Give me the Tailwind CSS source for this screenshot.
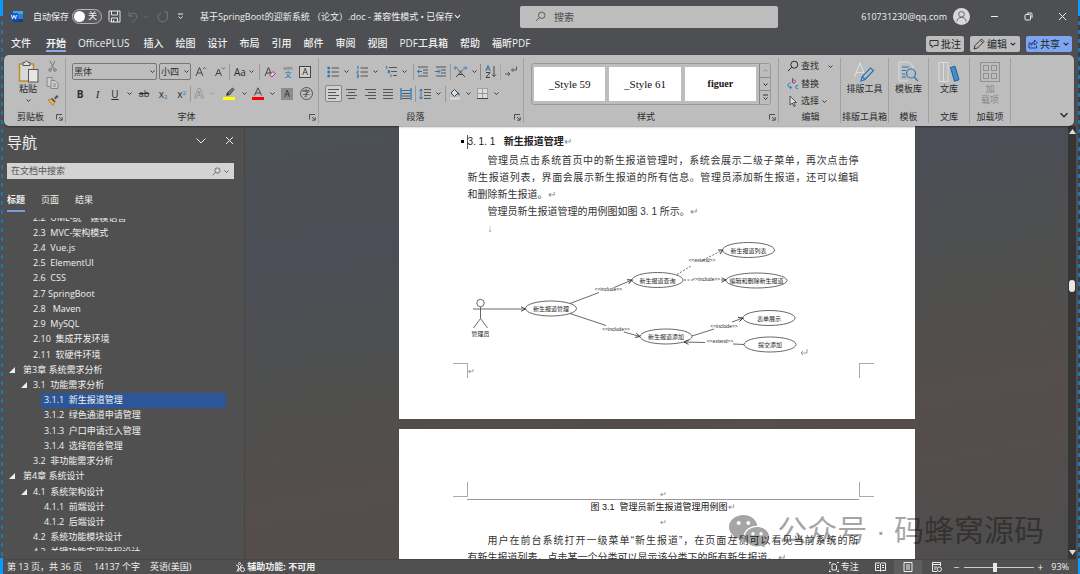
<!DOCTYPE html>
<html lang="zh-CN">
<head>
<meta charset="utf-8">
<meta name="viewport" content="width=device-width, initial-scale=1">
<title>基于SpringBoot的迎新系统 （论文）.doc</title>
<script src="https://cdn.jsdelivr.net/npm/@tailwindcss/browser@4"></script>
</head>
<body class="flex h-screen overflow-hidden bg-[#4d4f53] font-['Open_Sans','Noto_Sans_CJK_SC',sans-serif] text-[9px] leading-[12px] text-[#f0f0f0]">

<svg class="hidden" aria-hidden="true">
  <symbol id="chev" viewBox="0 0 7 7"><path d="M1.500 2.500l2 2 2-2" fill="none" stroke="currentColor" stroke-width=".9"/></symbol>
  <symbol id="launch" viewBox="0 0 7 7"><path d="M.5 5.500V.5H6M3 3l3 3M6.200 3v3.200H3" fill="none" stroke="#444" stroke-width=".9"/></symbol>
  <symbol id="lines" viewBox="0 0 12 12"><path d="M1 1.500h10M1 4.500h10M1 7.500h10M1 10.500h10" stroke="#555" stroke-width="1" fill="none"/></symbol>
  <symbol id="search" viewBox="0 0 12 12"><circle cx="7.300" cy="4.700" r="3.500" fill="none" stroke="currentColor"/><path d="M4.700 7.300L1 11" stroke="currentColor" fill="none"/></symbol>
</svg>

<!-- left window edge -->
<div class="flex w-1 shrink-0 flex-col">
  <div class="h-4 w-[3px] bg-[#0a9bff]"></div>
  <div class="ml-px w-[2px] flex-1 bg-[repeating-linear-gradient(#4d4f53_0_5px,#1f76ad_5px_9px)]"></div>
  <div class="h-4 w-[3px] bg-[#0a9bff]"></div>
</div>

<div class="flex min-w-0 flex-1 flex-col">
  <!-- title bar -->
  <header class="grid h-[33px] shrink-0 grid-cols-[516fr_258fr_298fr] items-center">
    <div class="flex items-center pl-1.5 whitespace-nowrap">
      <svg class="size-[13px]" viewBox="0 0 13 13"><rect x="3" y="1" width="10" height="11" rx="1" fill="#2b7cd3"/><rect x="3" y="1" width="10" height="3" fill="#41a5ee"/><rect x="3" y="9" width="10" height="3" fill="#103f91"/><rect y="3" width="8" height="7.500" rx="1" fill="#185abd"/><path d="M1.500 5l1 3.800L4 5.300l1.500 3.500 1-3.800" fill="none" stroke="#fff" stroke-width=".9"/></svg>
      <label for="autosave" class="ml-2.5">自动保存</label>
      <span class="relative ml-[3px] flex">
        <input id="autosave" type="checkbox" role="switch" class="h-[15px] w-[30px] appearance-none rounded-full border border-[#b5b5b5] bg-[#5b5b5b]">
        <span class="pointer-events-none absolute top-[2px] left-[2px] size-[11px] rounded-full bg-white"></span>
        <span class="pointer-events-none absolute top-[1px] left-4">关</span>
      </span>
      <button aria-label="保存" class="ml-1.5"><svg class="size-[13px]" viewBox="0 0 13 13" fill="none" stroke="#e8e8e8"><path d="M1 1h11v11H2.500L1 10.500zM3.500 1v4h6V1M3.500 12V8h6v4M5.500 12v-2"/></svg></button>
      <button aria-label="撤消" class="ml-1.5 flex items-center text-[#74777b]"><svg class="size-3" viewBox="0 0 12 12" fill="none" stroke="currentColor"><path d="M2 1v4h4M2 5c2-4 8-3.500 8 .5C10 8 7 9 5 11.500"/></svg><svg class="ml-1 size-[6px]"><use href="#chev"/></svg></button>
      <button aria-label="重做" class="ml-2 text-[#74777b]"><svg class="size-3" viewBox="0 0 12 12" fill="none" stroke="currentColor"><path d="M7 1h3.500v3.500M10 4.200A4.700 4.700 0 1 1 4 1.800"/></svg></button>
      <button aria-label="自定义快速访问工具栏" class="ml-2"><svg class="size-[7px]" viewBox="0 0 7 7" fill="none" stroke="#eee"><path d="M1 1h5M1.500 3.500l2 2 2-2"/></svg></button>
      <h1 class="ml-4">基于SpringBoot的迎新系统 （论文）.doc - 兼容性模式 • 已保存</h1>
      <svg class="size-[9px]"><use href="#chev"/></svg>
    </div>
    <label class="flex h-[22px] items-center rounded-xs bg-[#bdbdbd] px-[15px] text-[#555]">
      <svg class="size-[11px]"><use href="#search"/></svg>
      <input type="search" aria-label="搜索" placeholder="搜索" class="ml-2 min-w-0 flex-1 bg-transparent text-[10px] outline-none placeholder:text-[#4a4a4a]">
    </label>
    <div class="flex items-center justify-end pr-[9px]">
      <span>610731230@qq.com</span>
      <svg class="ml-1.5 size-[17px]" viewBox="0 0 17 17"><circle cx="8.500" cy="8.500" r="8.500" fill="#d8d8d8"/><g fill="none" stroke="#666"><circle cx="8.500" cy="6.300" r="2.800"/><path d="M3.800 13.500c.5-5.500 8.900-5.500 9.400 0"/></g></svg>
      <button aria-label="最小化" class="ml-5"><svg class="size-[9px]" viewBox="0 0 9 9"><path d="M1 4.500h7" stroke="#eee"/></svg></button>
      <button aria-label="还原" class="ml-[25px]"><svg class="size-[9px]" viewBox="0 0 9 9" fill="none" stroke="#eee"><rect x="1" y="2.500" width="5.500" height="5.500" rx="1"/><path d="M3 1h4c.7 0 1 .3 1 1v4"/></svg></button>
      <button aria-label="关闭" class="ml-[25px]"><svg class="size-[9px]" viewBox="0 0 9 9" stroke="#eee"><path d="M1 1l7 7M8 1L1 8"/></svg></button>
    </div>
  </header>

  <!-- ribbon tabs -->
  <div class="flex h-[22px] shrink-0 items-center justify-between pr-1 pl-[7px] text-[10px] leading-[14px] whitespace-nowrap">
    <nav class="flex gap-3 font-medium" aria-label="功能区选项卡">
      <a href="#" class="mr-[3px]">文件</a>
      <a href="#" class="border-b-2 border-[#8fa9e6] font-bold">开始</a>
      <a href="#" class="mr-0.5">OfficePLUS</a><a href="#">插入</a><a href="#">绘图</a><a href="#">设计</a><a href="#">布局</a><a href="#">引用</a><a href="#">邮件</a><a href="#">审阅</a><a href="#">视图</a><a href="#">PDF工具箱</a><a href="#">帮助</a><a href="#">福昕PDF</a>
    </nav>
    <div class="flex gap-1.5 text-[#222]">
      <button class="flex h-4 items-center gap-0.5 rounded-xs bg-[#bdbdbd] px-[3px]"><svg class="size-[10px]" viewBox="0 0 10 10" fill="none" stroke="#333"><path d="M1 1.500h8v5H5L3 8.500v-2H1z"/></svg>批注</button>
      <button class="flex h-4 items-center gap-0.5 rounded-xs bg-[#bdbdbd] px-[3px]"><svg class="size-3" viewBox="0 0 12 12" fill="none" stroke="#333"><path d="M1 11l1-3.500L8.500 1 11 3.500 4.500 10zM7.500 2.500L9.700 4.700"/></svg>编辑<svg class="size-2"><use href="#chev"/></svg></button>
      <button class="flex h-4 items-center gap-0.5 rounded-xs bg-[#7ea6f0] px-0.5"><svg class="size-[10px]" viewBox="0 0 10 10" fill="none" stroke="#1d3f80"><path d="M3 4H1v5h7.500V6.500M3 6.500C3.200 4 4.500 3 6.500 3V1L9.200 3.700 6.500 6V4.500C5 4.500 4 5 3 6.500z"/></svg>共享<svg class="size-2"><use href="#chev"/></svg></button>
    </div>
  </div>

  <!-- ribbon -->
  <div class="z-10 mr-0.5 flex h-[71px] shrink-0 rounded-[5px] bg-[#bdbdbd] py-[3px] text-[#2c2c2c] shadow-[0_1px_2px_#0006]">
    <section class="flex w-[62px] flex-col border-r border-[#a0a0a0]" aria-label="剪贴板">
      <div class="flex flex-1 pl-3">
        <button class="flex w-6 flex-col items-center pt-0.5">
          <svg class="h-[23px] w-[21px] shrink-0" viewBox="0 0 21 23" fill="none"><rect x="1.500" y="4" width="14" height="17" fill="#d8d8d8" stroke="#c58a2c" stroke-width="1.500"/><path d="M5 5.500v-3h2c0-2 3-2 3 0h2v3z" fill="#ddd" stroke="#555"/><rect x="10.500" y="9.500" width="9.500" height="12.500" fill="#e6e6e6" stroke="#555"/></svg>
          <span class="leading-[12px] whitespace-nowrap">粘贴</span>
          <svg class="mt-0.5 size-[7px]"><use href="#chev"/></svg>
        </button>
        <div class="ml-1.5 flex flex-col items-center gap-[5px] pt-[3px]">
          <button aria-label="剪切"><svg class="size-[11px]" viewBox="0 0 11 11" fill="none" stroke="#777"><path d="M3 0l4 8M8 0L4 8"/><circle cx="3" cy="9" r="1.300"/><circle cx="8" cy="9" r="1.300"/></svg></button>
          <button aria-label="复制"><svg class="h-3 w-[13px]" viewBox="0 0 13 12" fill="#ccc" stroke="#888"><path d="M1 .5h5v9H1z"/><path d="M5 3.500h4l3 3v5H5z"/><path d="M7 7h3M7 9h3"/></svg></button>
          <button aria-label="格式刷"><svg class="size-3" viewBox="0 0 12 12"><path d="M7 4l3-3 1.500 1.500-3 3z" fill="#555"/><path d="M4.500 4.500L8 8" stroke="#444" stroke-width="1.600"/><path d="M1 6l3-1 3.500 3.500L6 11.500z" fill="#e8b34f" stroke="#8a6b2c" stroke-width=".6"/></svg></button>
        </div>
      </div>
      <div class="flex items-center pl-[13px]"><span>剪贴板</span><button aria-label="剪贴板设置" class="ml-auto pr-[2px]"><svg class="size-[7px]"><use href="#launch"/></svg></button></div>
    </section>

    <section class="flex w-[253px] flex-col border-r border-[#a0a0a0] pl-1.5" aria-label="字体">
      <div class="mt-[5px] flex h-[17px] items-center">
        <span class="relative flex"><select aria-label="字体名称" class="h-[17px] w-[85px] appearance-none rounded-xs border border-[#777] pl-px leading-[12px]"><option>黑体</option></select><svg class="pointer-events-none absolute top-[5px] right-px size-[7px]"><use href="#chev"/></svg></span>
        <span class="relative ml-0.5 flex"><select aria-label="字号" class="h-[17px] w-8 appearance-none rounded-xs border border-[#777] pl-px leading-[12px]"><option>小四</option></select><svg class="pointer-events-none absolute top-[5px] right-px size-[7px]"><use href="#chev"/></svg></span>
        <button aria-label="增大字号" class="flex w-[19px] justify-center"><svg class="size-3" viewBox="0 0 12 12" fill="none"><path d="M1 10L4.500 1.500 8 10M2.300 7h4.400" stroke="#444"/><path d="M8 3l1.500-1.500L11 3" stroke="#2374b8"/></svg></button>
        <button aria-label="减小字号" class="flex w-[19px] justify-center"><svg class="size-3" viewBox="0 0 12 12" fill="none"><path d="M1.500 10l3-7 3 7M2.700 7.500h3.700" stroke="#444"/><path d="M8 1.500L9.500 3 11 1.500" stroke="#2374b8"/></svg></button>
        <i class="h-4 w-px bg-[#999]"></i>
        <button aria-label="更改大小写" class="flex w-[29px] items-center justify-center gap-0.5 text-[10px]">Aa<svg class="size-[7px]"><use href="#chev"/></svg></button>
        <i class="h-4 w-px bg-[#999]"></i>
        <button aria-label="清除所有格式" class="flex w-[19px] justify-center"><svg class="size-3" viewBox="0 0 12 12" fill="none"><path d="M1 10L4.500 1.500 8 10M2.300 7h4" stroke="#444"/><path d="M5.500 9L9 5.500l2.500 2L8 11z" fill="#ecc9e0" stroke="#a23a80"/></svg></button>
        <button aria-label="拼音指南" class="flex w-[17px] flex-col items-center"><svg class="h-[13px] w-3" viewBox="0 0 12 13"><text x="6" y="4.500" font-size="5" text-anchor="middle" fill="#666">wén</text><text x="6" y="12" font-size="7" text-anchor="middle" fill="#2374b8">文</text></svg></button>
        <button aria-label="字符边框" class="flex w-[18px] justify-center"><span class="size-3 border border-[#444] bg-[#d0d0d0] text-center text-[9px] leading-[10px]">A</span></button>
      </div>
      <div class="mt-[5px] flex h-[17px] items-center text-[10px]">
        <button class="w-4 font-bold" aria-label="加粗">B</button>
        <button class="w-[19px] font-['Liberation_Serif'] text-[11px] italic" aria-label="倾斜">I</button>
        <button class="w-4 underline" aria-label="下划线">U</button>
        <button aria-label="下划线样式" class="flex w-3 justify-center"><svg class="size-[7px]"><use href="#chev"/></svg></button>
        <button class="w-[18px] text-[9px] line-through" aria-label="删除线">ab</button>
        <button class="w-5" aria-label="下标">x<sub class="text-[6px] text-[#2374b8]">2</sub></button>
        <button class="w-[17px]" aria-label="上标">x<sup class="text-[6px] text-[#2374b8]">2</sup></button>
        <i class="h-4 w-px bg-[#999]"></i>
        <button aria-label="文本效果" class="flex w-[27px] items-center justify-center gap-1 text-[#999]"><svg class="h-[11px] w-[10px]" viewBox="0 0 10 11" fill="none" stroke="#999"><path d="M.5 10L4 .5h2L9.500 10h-2l-.8-2.500H3.300L2.500 10zM4 6h2L5 3z"/></svg><svg class="size-[7px]"><use href="#chev"/></svg></button>
        <button aria-label="突出显示" class="flex w-[22px] items-center justify-center"><svg class="h-[13px] w-3" viewBox="0 0 12 13"><path d="M4 6l5.500-5L11 2.500 6.500 8z" fill="#777" stroke="#333" stroke-width=".8"/><path d="M4 6l2.500 2L3 8.700z" fill="#222"/><rect y="10" width="12" height="3" fill="#ffff00"/></svg></button>
        <button aria-label="突出显示颜色" class="flex w-2 justify-center"><svg class="size-[7px]"><use href="#chev"/></svg></button>
        <button aria-label="字体颜色" class="flex w-5 justify-center"><svg class="h-[13px] w-3" viewBox="0 0 12 13"><path d="M2.500 8.500L6 .8l3.500 7.700M3.700 6h4.600" fill="none" stroke="#444"/><rect y="10" width="12" height="3" fill="#f00"/></svg></button>
        <button aria-label="更多字体颜色" class="flex w-2 justify-center"><svg class="size-[7px]"><use href="#chev"/></svg></button>
        <button aria-label="字符底纹" class="flex w-[22px] justify-center"><span class="size-3 bg-[#8c8c8c] text-center text-[9px] leading-[12px]">A</span></button>
        <button aria-label="带圈字符" class="flex w-4 justify-center"><span class="size-[13px] shrink-0 rounded-full border border-[#555] text-center text-[8px] leading-[10px]">字</span></button>
      </div>
      <div class="mt-auto flex items-center"><span class="flex-1 pr-2 text-center">字体</span><button aria-label="字体设置" class="pr-[2px]"><svg class="size-[7px]"><use href="#launch"/></svg></button></div>
    </section>

    <section class="flex w-[205px] flex-col border-r border-[#a0a0a0] pl-1.5" aria-label="段落">
      <div class="mt-[5px] flex h-[17px] items-center">
        <button aria-label="项目符号" class="flex w-[29px] items-center gap-1 pl-0.5"><svg class="size-3" viewBox="0 0 12 12"><path d="M4.500 2H12M4.500 6H12M4.500 10H12" stroke="#555"/><path d="M.5 .8h2.400v2.400H.5zM.5 4.800h2.400v2.400H.5zM.5 8.800h2.400v2.400H.5z" fill="#2374b8"/></svg><svg class="size-[7px]"><use href="#chev"/></svg></button>
        <button aria-label="编号" class="flex w-[29px] items-center gap-1 pl-0.5"><svg class="size-3" viewBox="0 0 12 12"><path d="M4.500 2H12M4.500 6H12M4.500 10H12" stroke="#555"/><path d="M1 .8l1-.5v3M.8 5h1.500L.8 7h1.700M.8 8.800h1.500v2.600H.8M1 10h1.200" fill="none" stroke="#2374b8" stroke-width=".9"/></svg><svg class="size-[7px]"><use href="#chev"/></svg></button>
        <button aria-label="多级列表" class="flex w-[30px] items-center gap-1 pl-0.5"><svg class="size-3" viewBox="0 0 12 12"><path d="M4 1.500h8M6 5.500h6M8 9.500h4" stroke="#555"/><path d="M.8 1l1-.5v2.700M3 4.500h1.500v2.300H3V5.600h1.500M6 8.300v2.700" fill="none" stroke="#2374b8" stroke-width=".9"/></svg><svg class="size-[7px]"><use href="#chev"/></svg></button>
        <i class="h-4 w-px bg-[#999]"></i>
        <button aria-label="减少缩进量" class="flex w-[18px] justify-center"><svg class="h-[11px] w-3" viewBox="0 0 12 11" fill="none"><path d="M1 1h10M6 4h5M6 7h5M1 10h10" stroke="#555"/><path d="M5 5.500H1M2.500 3.500l-2 2 2 2" stroke="#2374b8"/></svg></button>
        <button aria-label="增加缩进量" class="flex w-[18px] justify-center"><svg class="h-[11px] w-3" viewBox="0 0 12 11" fill="none"><path d="M1 1h10M6 4h5M6 7h5M1 10h10" stroke="#555"/><path d="M0 5.500h4.500M3 3.500l2 2-2 2" stroke="#2374b8"/></svg></button>
        <i class="h-4 w-px bg-[#999]"></i>
        <button aria-label="中文版式" class="flex w-[29px] items-center justify-center gap-1"><svg class="h-3 w-[13px]" viewBox="0 0 13 12" fill="none"><path d="M2 11l7-7.500M11 11L4 3.500M4 8.500h5" stroke="#444"/><path d="M0 2h4M2 .3L.3 2 2 3.700M9 2h4M11 .3L12.700 2 11 3.700" stroke="#2374b8" stroke-width=".8"/></svg><svg class="size-[7px]"><use href="#chev"/></svg></button>
        <i class="h-4 w-px bg-[#888]"></i>
        <button aria-label="排序" class="flex w-[19px] justify-center"><svg class="h-[13px] w-3" viewBox="0 0 12 13" fill="none"><path d="M.8 6L3 .5 5.200 6M1.500 4h3" stroke="#2374b8"/><path d="M1 7.500h4L1 12.500h4M9 1v10.500M7 9.500l2 2 2-2" stroke="#444"/></svg></button>
        <i class="h-4 w-px bg-[#aaa]"></i>
        <button aria-label="显示编辑标记" class="flex w-5 justify-center"><svg class="h-[11px] w-3" viewBox="0 0 12 11" fill="none" stroke="#555"><path d="M0 8h5M3 6l2 2-2 2M11.500.5V4H6.500M8.300 2.200L6.500 4l1.800 1.800"/></svg></button>
      </div>
      <div class="mt-[5px] flex h-[17px] items-center">
        <button aria-label="左对齐" class="flex size-[17px] items-center justify-center rounded-xs border border-[#888] bg-[#d0d0d0]"><svg class="size-[11px]" viewBox="0 0 11 11"><path d="M0 1.500h11M0 4.500h8M0 7.500h11M0 10.500h8" stroke="#555"/></svg></button>
        <button aria-label="居中" class="flex w-[19px] justify-center"><svg class="size-[11px]" viewBox="0 0 11 11"><path d="M0 1.500h11M2 4.500h7M0 7.500h11M2 10.500h7" stroke="#555"/></svg></button>
        <button aria-label="右对齐" class="flex w-[18px] justify-center"><svg class="size-[11px]" viewBox="0 0 11 11"><path d="M0 1.500h11M3 4.500h8M0 7.500h11M3 10.500h8" stroke="#555"/></svg></button>
        <button aria-label="两端对齐" class="flex w-[18px] justify-center"><svg class="size-3"><use href="#lines"/></svg></button>
        <button aria-label="分散对齐" class="flex w-[18px] justify-center"><svg class="size-3" viewBox="0 0 12 12"><path d="M2 5.500h8M2 8h8M2 10.500h8" stroke="#555"/><path d="M1 0v12M11 0v12M1 2.500h10" stroke="#2374b8" stroke-width="1.200"/></svg></button>
        <i class="h-4 w-px bg-[#999]"></i>
        <button aria-label="行和段落间距" class="flex w-[29px] items-center justify-center gap-1"><svg class="size-3" viewBox="0 0 12 12" fill="none"><path d="M5 1.500h7M5 4.500h7M5 7.500h7M5 10.500h7" stroke="#555"/><path d="M2 1v10M.3 2.800L2 1l1.700 1.800M.3 9.200L2 11l1.700-1.800" stroke="#2374b8"/></svg><svg class="size-[7px]"><use href="#chev"/></svg></button>
        <i class="h-4 w-px bg-[#999]"></i>
        <button aria-label="底纹" class="flex w-[28px] items-center justify-center gap-1"><svg class="size-3" viewBox="0 0 12 12"><path d="M2 5l3.500-3.500L9 5 5.500 8.500z" fill="#ddd" stroke="#444"/><path d="M9 4c2 1.500 2 3 1.200 3.500S8.500 6 9 4z" fill="#2374b8"/><path d="M1 10.500h10" stroke="#ddd" stroke-width="2"/></svg><svg class="size-[7px]"><use href="#chev"/></svg></button>
        <button aria-label="边框" class="flex w-[28px] items-center justify-center gap-[5px]"><svg class="size-[11px]" viewBox="0 0 11 11" fill="none"><rect x=".5" y=".5" width="10" height="10" fill="#ddd" stroke="#777" stroke-dasharray="1 1"/><path d="M0 10.500h11" stroke="#444"/><path d="M5.500 0v10M0 5.500h11" stroke="#999"/></svg><svg class="size-[7px]"><use href="#chev"/></svg></button>
      </div>
      <div class="mt-auto flex items-center"><span class="flex-1 pr-2 text-center">段落</span><button aria-label="段落设置" class="pr-[2px]"><svg class="size-[7px]"><use href="#launch"/></svg></button></div>
    </section>

    <section class="flex w-[255px] flex-col border-r border-[#a0a0a0] pr-[2px] pl-[7px]" aria-label="样式">
      <div class="mt-[5px] mr-[5px] flex h-[42px] rounded-[3px] border border-[#999] font-['Liberation_Serif',serif] text-[11px] text-[#111]">
        <div class="flex flex-1 gap-1 p-[3px] pl-0.5">
          <button class="flex-1 bg-white">_Style 59</button>
          <button class="flex-1 bg-white">_Style 61</button>
          <button class="flex-1 bg-white text-[10px] font-bold">figuer</button>
        </div>
        <div class="flex w-[11px] flex-col divide-y divide-[#888] border-l border-[#888]">
          <button aria-label="上一行" class="flex flex-1 items-center justify-center text-[#888]"><svg class="size-[7px] rotate-180"><use href="#chev"/></svg></button>
          <button aria-label="下一行" class="flex flex-1 items-center justify-center"><svg class="size-[7px]"><use href="#chev"/></svg></button>
          <button aria-label="其他样式" class="flex flex-1 items-center justify-center"><svg class="size-[7px]" viewBox="0 0 7 7" fill="none" stroke="#333"><path d="M1 1h5M1.500 3.500l2 2 2-2"/></svg></button>
        </div>
      </div>
      <div class="mt-auto flex items-center"><span class="flex-1 pr-2 text-center">样式</span><button aria-label="样式设置"><svg class="size-[7px]"><use href="#launch"/></svg></button></div>
    </section>

    <section class="flex w-[62px] flex-col border-r border-[#a0a0a0] pl-2" aria-label="编辑">
      <div class="flex flex-1 flex-col items-start justify-between pt-0.5 pb-1">
        <button class="flex items-center gap-0.5"><svg class="size-3"><use href="#search"/></svg>查找<svg class="ml-1.5 size-[7px]"><use href="#chev"/></svg></button>
        <button class="flex items-center gap-0.5"><svg class="size-3" viewBox="0 0 12 12" fill="none"><path d="M5.500 0v5M5.500 3.500a1.500 1.500 0 1 1 0 .1" stroke="#a23a80"/><path d="M3.500 5C0 5.500 0 9.500 4 9.500M3 8l1.500 1.500L3 11M11 7.500c-2.500-1-3.500 3.500 0 3" stroke="#2374b8"/></svg>替换</button>
        <button class="flex items-center gap-0.5"><svg class="size-3" viewBox="0 0 12 12"><path d="M3 1v9l2.300-2L7 11.500l1.300-.7L6.700 7.500H9.500z" fill="#ddd" stroke="#444" stroke-width=".9"/></svg>选择<svg class="size-[7px]"><use href="#chev"/></svg></button>
      </div>
      <div class="mt-auto pr-1.5 text-center">编辑</div>
    </section>

    <section class="flex w-12 flex-col items-center border-r border-[#a0a0a0] whitespace-nowrap" aria-label="排版工具箱">
      <button class="flex flex-col items-center pt-[3px]"><svg class="size-[22px]" viewBox="0 0 22 22" fill="none"><path d="M1.500 16L7 2l5 12M3.500 11.500H11" stroke="#dcdcdc" stroke-width="1.200"/><path d="M8 20l1.200-4.500L17.500 7 20.500 9.500 12 18.500zM9.200 15.500L12 18.500" stroke="#2374b8" stroke-width="1.200"/></svg>排版工具</button>
      <div class="mt-auto">排版工具箱</div>
    </section>
    <section class="flex w-10 flex-col items-center border-r border-[#a0a0a0] whitespace-nowrap" aria-label="模板">
      <button class="flex flex-col items-center pt-[3px]"><svg class="size-[22px]" viewBox="0 0 22 22" fill="none"><path d="M2 1h10l4 4v4M2 1v19h9" stroke="#dcdcdc"/><path d="M5 6h7M5 9.500h4M5 13h3M5 16h4" stroke="#2374b8"/><circle cx="14" cy="12.500" r="4.500" stroke="#2374b8" stroke-width="1.200"/><path d="M17 16l4 4" stroke="#2374b8" stroke-width="1.200"/></svg>模板库</button>
      <div class="mt-auto">模板</div>
    </section>
    <section class="flex w-[41px] flex-col items-center border-r border-[#a0a0a0]" aria-label="文库">
      <button class="flex flex-col items-center pt-[3px]"><svg class="size-[22px]" viewBox="0 0 22 22"><path d="M1 1.500h4.500v19H1zM5.500 1.500H10v19H5.500z" fill="none" stroke="#dcdcdc"/><path d="M12.500 6.500l4.500-1.200 4 13.500-4.500 1.500z" fill="#3f8fd0" stroke="#1c5d99"/></svg>文库</button>
      <div class="mt-auto">文库</div>
    </section>
    <section class="flex w-[41px] flex-col items-center border-r border-[#a0a0a0]" aria-label="加载项">
      <button disabled class="flex flex-col items-center pt-[3px] leading-[11px] text-[#888]"><svg class="size-[22px] shrink-0" viewBox="0 0 22 22" fill="none" stroke="#909090"><rect x="1.500" y="1.500" width="19" height="19"/><rect x="4.500" y="4.500" width="5" height="5"/><rect x="12.500" y="4.500" width="5" height="5"/><rect x="4.500" y="12.500" width="5" height="5"/><rect x="12.500" y="12.500" width="5" height="5"/></svg><span>加<br>载项</span></button>
      <div class="mt-auto">加载项</div>
    </section>
    <div class="flex flex-1 items-end justify-end pr-1 pb-0.5"><button aria-label="折叠功能区"><svg class="size-3"><use href="#chev"/></svg></button></div>
  </div>

  <!-- work area -->
  <div class="flex min-h-0 flex-1">
    <aside class="flex w-[241px] shrink-0 flex-col border-r border-[#464646] bg-[#505050] pb-2 pl-[3px]">
      <div class="flex h-[37px] items-center pr-2.5">
        <h2 class="flex-1 pb-1.5 text-[15px] leading-[20px]">导航</h2>
        <button aria-label="任务窗格选项"><svg class="mb-2 h-[9px] w-3" viewBox="0 0 12 9" fill="none" stroke="#eee"><path d="M1.500 2.500L6 7l4.500-4.500"/></svg></button>
        <button aria-label="关闭导航" class="ml-[18px]"><svg class="mb-2 size-[9px]" viewBox="0 0 9 9" stroke="#eee"><path d="M1 1l7 7M8 1L1 8"/></svg></button>
      </div>
      <label class="mr-2.5 flex h-4 items-center bg-[#d3d3d3] px-1 text-[#555]">
        <input type="search" aria-label="在文档中搜索" placeholder="在文档中搜索" class="min-w-0 flex-1 bg-transparent outline-none placeholder:text-[#555]">
        <svg class="size-[9px]"><use href="#search"/></svg><svg class="ml-0.5 size-[7px]"><use href="#chev"/></svg>
      </label>
      <nav class="mt-[15px] flex gap-4" aria-label="导航视图">
        <a href="#" class="border-b-2 border-[#8097df] pb-1 font-bold">标题</a><a href="#">页面</a><a href="#">结果</a>
      </nav>
      <div class="mt-1.5 mr-2.5 min-h-0 flex-1 overflow-hidden">
        <ul class="-mt-2 grid h-[calc(100%+17px)] auto-rows-fr items-center whitespace-pre text-[#f0f0f0]">
          <li class="pl-[26px]">2.2  UML-统一建模语言</li>
          <li class="pl-[26px]">2.3  MVC-架构模式</li>
          <li class="pl-[26px]">2.4  Vue.js</li>
          <li class="pl-[26px]">2.5  ElementUI</li>
          <li class="pl-[26px]">2.6  CSS</li>
          <li class="pl-[26px]">2.7 SpringBoot</li>
          <li class="pl-[26px]">2.8   Maven</li>
          <li class="pl-[26px]">2.9  MySQL</li>
          <li class="pl-[26px]">2.10  集成开发环境</li>
          <li class="pl-[26px]">2.11  软硬件环境</li>
          <li class="flex items-center gap-2 pl-0.5"><svg class="size-[6px]" viewBox="0 0 6 6"><path d="M6 0v6H0z" fill="#eee"/></svg>第3章 系统需求分析</li>
          <li class="flex items-center gap-1.5 pl-3.5"><svg class="size-[6px]" viewBox="0 0 6 6"><path d="M6 0v6H0z" fill="#eee"/></svg>3.1  功能需求分析</li>
          <li aria-current="true" class="mr-2 ml-[34px] self-stretch bg-[#2b579a] pl-[3px] leading-[14px]">3.1.1  新生报道管理</li>
          <li class="pl-[37px]">3.1.2  绿色通道申请管理</li>
          <li class="pl-[37px]">3.1.3  户口申请迁入管理</li>
          <li class="pl-[37px]">3.1.4  选择宿舍管理</li>
          <li class="pl-[26px]">3.2  非功能需求分析</li>
          <li class="flex items-center gap-2 pl-0.5"><svg class="size-[6px]" viewBox="0 0 6 6"><path d="M6 0v6H0z" fill="#eee"/></svg>第4章 系统设计</li>
          <li class="flex items-center gap-1.5 pl-3.5"><svg class="size-[6px]" viewBox="0 0 6 6"><path d="M6 0v6H0z" fill="#eee"/></svg>4.1  系统架构设计</li>
          <li class="pl-[37px]">4.1.1  前端设计</li>
          <li class="pl-[37px]">4.1.2  后端设计</li>
          <li class="pl-[26px]">4.2  系统功能模块设计</li>
          <li class="pl-[26px]">4.3  关键功能实现流程设计</li>
        </ul>
      </div>
    </aside>

    <main id="doc" class="relative min-w-0 flex-1 overflow-hidden bg-[linear-gradient(170deg,#4c5155_0%,#4b4e56_25%,#4f4f4d_50%,#554d4b_72%,#4e4e4e_100%)] font-['Liberation_Sans','Noto_Sans_CJK_SC',sans-serif] text-[10px] leading-[17px] text-[#333]">
      <article class="mx-auto w-[516px] bg-white pt-[7px] pb-[41px]">
        <div class="pr-14 pl-[69px]">
          <h3 class="-ml-[7px] flex items-center font-bold whitespace-pre text-[#222]"><i class="mr-[3px] size-[3px] bg-black"></i><i class="h-3.5 w-px bg-[#555]"></i><span class="font-normal">3. 1. 1</span>   新生报道管理<span class="font-normal text-[#888]">↵</span></h3>
          <div class="mt-0.5">
            <p class="pl-5 text-justify [text-align-last:justify]">管理员点击系统首页中的新生报道管理时，系统会展示二级子菜单，再次点击停</p>
            <p class="text-justify [text-align-last:justify]">新生报道列表，界面会展示新生报道的所有信息。管理员添加新生报道，还可以编辑</p>
            <p>和删除新生报道。<span class="text-[#888]">↵</span></p>
            <p class="pl-5">管理员新生报道管理的用例图如图 3. 1 所示。<span class="text-[#888]">↵</span></p>
            <p class="pl-5 text-[#888]">↓</p>
          </div>
          <svg class="h-[118px] w-full" viewBox="468 237 391 118" fill="none" stroke="#444" stroke-width=".8" role="img" aria-label="管理员新生报道管理用例图">
            <defs><marker id="arr" viewBox="0 0 6 6" refX="5.500" refY="3" markerWidth="6" markerHeight="6" orient="auto-start-reverse" markerUnits="userSpaceOnUse"><path d="M1 .8L5.500 3 1 5.200" fill="none" stroke="#333" stroke-width=".9"/></marker></defs>
            <circle cx="480.500" cy="303" r="3.700"/><path d="M480.500 307v11.500M480.500 318.500l-7 9.500M480.500 318.500l7 9.500M473 309h8"/>
            <path d="M481 309h44.500" marker-end="url(#arr)"/>
            <path d="M570 303.500l29-11"/><path d="M614 287.500l18-7.500" marker-end="url(#arr)"/>
            <path d="M570 313.500l36 12"/><path d="M624 332l16 4.500" marker-end="url(#arr)"/>
            <path d="M677 274.500l14-8.500" stroke-dasharray="2 1.500"/><path d="M703 260l20-10" stroke-dasharray="2 1.500" marker-end="url(#arr)"/>
            <path d="M684 280h9" stroke-dasharray="2 1.500"/><path d="M721 280h5" marker-end="url(#arr)"/>
            <path d="M692 336l22-7"/><path d="M732 322l11-4" marker-end="url(#arr)"/>
            <path d="M744 344.500l-11-.5"/><path d="M705 342.500l-21-.5" marker-end="url(#arr)"/>
            <g>
              <ellipse cx="551" cy="308.500" rx="25.500" ry="7.500"/><ellipse cx="657.500" cy="280" rx="25.500" ry="7.500"/><ellipse cx="666" cy="336.500" rx="26" ry="7.500"/>
              <ellipse cx="748.500" cy="250" rx="26" ry="7.500"/><ellipse cx="756.500" cy="280.500" rx="30.500" ry="7.500"/><ellipse cx="769" cy="318" rx="26" ry="7.500"/><ellipse cx="770" cy="344.500" rx="26" ry="7.500"/>
            </g>
            <g fill="#222" stroke="none" font-size="6" text-anchor="middle">
              <text x="551" y="311">新生报道管理</text><text x="657.500" y="282.500">新生报道查询</text><text x="666" y="339">新生报道添加</text>
              <text x="748.500" y="252.500">新生报道列表</text><text x="756.500" y="283">编辑和删除新生报道</text><text x="769" y="320.500">表单展示</text><text x="770" y="347">提交添加</text><text x="480.500" y="336">管理员</text>
            </g>
            <g fill="#222" stroke="none" font-size="5" text-anchor="middle">
              <text x="608.500" y="291">&lt;&lt;include&gt;&gt;</text><text x="616" y="330.500">&lt;&lt;include&gt;&gt;</text><text x="702" y="262">&lt;&lt;extend&gt;&gt;</text><text x="706.500" y="280.500">&lt;&lt;include&gt;&gt;</text><text x="724" y="327.500">&lt;&lt;include&gt;&gt;</text><text x="720" y="343">&lt;&lt;extend&gt;&gt;</text>
            </g>
            <path d="M807 349v4h-6M803 351l-2 2 2 2" stroke="#888"/>
          </svg>
        </div>
        <div class="mt-2 flex h-[15px] justify-between pr-[41px] pl-[54px]">
          <i class="size-[15px] border-t border-r border-[#aaa]"></i>
          <span class="mr-auto text-[8px] text-[#888]">↵</span>
          <i class="size-[15px] border-t border-l border-[#aaa]"></i>
        </div>
      </article>

      <article class="mx-auto mt-2.5 w-[516px] bg-white pt-[53px] pb-10">
        <div class="flex h-[15px] justify-between pr-[41px] pl-[54px]">
          <i class="size-[15px] border-r border-b border-[#aaa]"></i>
          <span class="pt-1 text-[8px] text-[#888]">↵</span>
          <i class="size-[15px] border-b border-l border-[#aaa]"></i>
        </div>
        <div class="mt-0.5 mr-14 ml-[68px] border-t border-[#999] pl-px">
          <p class="text-center text-[9px] leading-[14px] text-[#111]">图 3.1&nbsp; 管理员新生报道管理用例图<span class="text-[#888]">↵</span></p>
          <p class="text-center text-[8px] leading-[18px] text-[#888]">↵</p>
          <p class="pl-5 text-justify [text-align-last:justify]">用户在前台系统打开一级菜单“新生报道”，在页面左侧可以看见当前系统的所</p>
          <p>有新生报道列表，点击某一个分类可以显示该分类下的所有新生报道。<span class="text-[#888]">↵</span></p>
        </div>
      </article>

      <!-- watermark floating over the pages -->
      <div class="pointer-events-none absolute right-6 bottom-1.5 flex items-center gap-2 text-[30px] leading-[44px] whitespace-nowrap text-black opacity-35">
        <svg class="h-8 w-10" viewBox="0 0 40 32" fill="currentColor" fill-rule="evenodd"><path d="M14.500 0C6.500 0 0 5.300 0 12c0 3.700 2 7 5.200 9.200L4 25.500l5-2.500c1.700.5 3.500.8 5.400.8-.9-7.500 5.700-13.300 13.900-13C27.500 4.700 21.600 0 14.500 0zM9.700 6a2 2 0 1 1 0 4 2 2 0 0 1 0-4zm9.600 0a2 2 0 1 1 0 4 2 2 0 0 1 0-4z"/><path d="M28 12c-6.700 0-12 4.300-12 9.700s5.300 9.700 12 9.700c1.400 0 2.800-.2 4-.6l4.200 2-1-3.600c2.900-1.800 4.800-4.500 4.800-7.500 0-5.400-5.300-9.700-12-9.700zm-4 5a1.700 1.700 0 1 1 0 3.400 1.700 1.700 0 0 1 0-3.400zm8 0a1.700 1.700 0 1 1 0 3.400 1.700 1.700 0 0 1 0-3.400z"/></svg>
        <span>公众号 · 码蜂窝源码</span>
      </div>
    </main>

    <div class="flex w-2 shrink-0 flex-col items-center bg-[#353535] pt-0.5 pb-[3px]" role="scrollbar" aria-label="垂直滚动条" aria-controls="doc" aria-valuenow="36">
      <svg class="size-[7px]" viewBox="0 0 7 7"><path d="M3.500 1L7 6H0z" fill="#ddd"/></svg>
      <div class="flex-[36]"></div>
      <div class="h-3 w-1.5 rounded-full bg-[#e8e8e8]"></div>
      <div class="flex-[64]"></div>
      <svg class="size-[7px]" viewBox="0 0 7 7"><path d="M3.500 6L7 1H0z" fill="#ddd"/></svg>
    </div>
  </div>

  <!-- status bar -->
  <footer class="flex h-[15px] shrink-0 items-center border-t border-[#464646] bg-[#505050] pr-[7px] pl-[3px] whitespace-nowrap">
    <span>第 13 页，共 36 页</span><span class="ml-3">14137 个字</span><span class="ml-2.5">英语(美国)</span>
    <button class="ml-11 flex items-center gap-0.5 font-bold"><svg class="size-[10px]" viewBox="0 0 10 10" fill="none" stroke="#eee"><circle cx="4.500" cy="1.500" r="1"/><path d="M1 3l2.500 1v2L2 9.500M8 3L5.500 4v2M4.500 6L3.500 9.500"/><circle cx="7.500" cy="7.500" r="2"/></svg>辅助功能: 不可用</button>
    <button class="ml-auto flex items-center gap-0.5"><svg class="size-[10px]" viewBox="0 0 10 10" fill="none" stroke="#eee"><path d="M0 2.500V.5h2M8 .5h2M0 7.500v2h2M10 7.500v2H8M3 2h3l1.500 1.500V8H3z"/></svg>专注</button>
    <button aria-label="阅读视图" class="ml-4"><svg class="h-[10px] w-[11px]" viewBox="0 0 11 10" fill="none" stroke="#eee"><path d="M.5 1h4l1 .7 1-.7h4v7.500h-4l-1 .7-1-.7h-4zM5.500 2v7M2 3.500h2M2 5.500h2M7 3.500h2M7 5.500h2"/></svg></button>
    <button aria-label="页面视图" aria-pressed="true" class="ml-2 flex h-[15px] w-7 items-center justify-center bg-[#5e5e5e]"><svg class="size-[10px]" viewBox="0 0 10 10" fill="none" stroke="#eee"><path d="M1 .5h8v9H1zM3 3h4M3 5h4M3 7h4"/></svg></button>
    <button aria-label="Web 版式视图" class="ml-2.5"><svg class="size-[10px]" viewBox="0 0 10 10" fill="none" stroke="#eee"><path d="M5 9.500H.5v-9h8V4M.5 2.500h8M2 5h3M2 7h2"/><circle cx="7.300" cy="7.200" r="2.200"/></svg></button>
    <button aria-label="缩小" class="ml-3 text-[10px]">−</button>
    <input type="range" aria-label="显示比例" min="0" max="100" value="45" class="mx-1 h-[9px] w-[70px] appearance-none bg-[linear-gradient(#ccc,#ccc)] bg-[length:100%_1px] bg-center bg-no-repeat [&::-webkit-slider-thumb]:h-[9px] [&::-webkit-slider-thumb]:w-1 [&::-webkit-slider-thumb]:appearance-none [&::-webkit-slider-thumb]:bg-[#e8e8e8]">
    <button aria-label="放大" class="text-[10px]">+</button>
    <span class="ml-2">93%</span>
  </footer>
</div>

<!-- right window edge -->
<div class="flex w-1 shrink-0 flex-col items-end">
  <div class="h-4 w-[2px] bg-[#0a9bff]"></div>
  <div class="w-[2px] flex-1 bg-[repeating-linear-gradient(#3c3e42_0_5px,#1f76ad_5px_9px)]"></div>
  <div class="h-4 w-[2px] bg-[#0a9bff]"></div>
</div>
</body>
</html>
